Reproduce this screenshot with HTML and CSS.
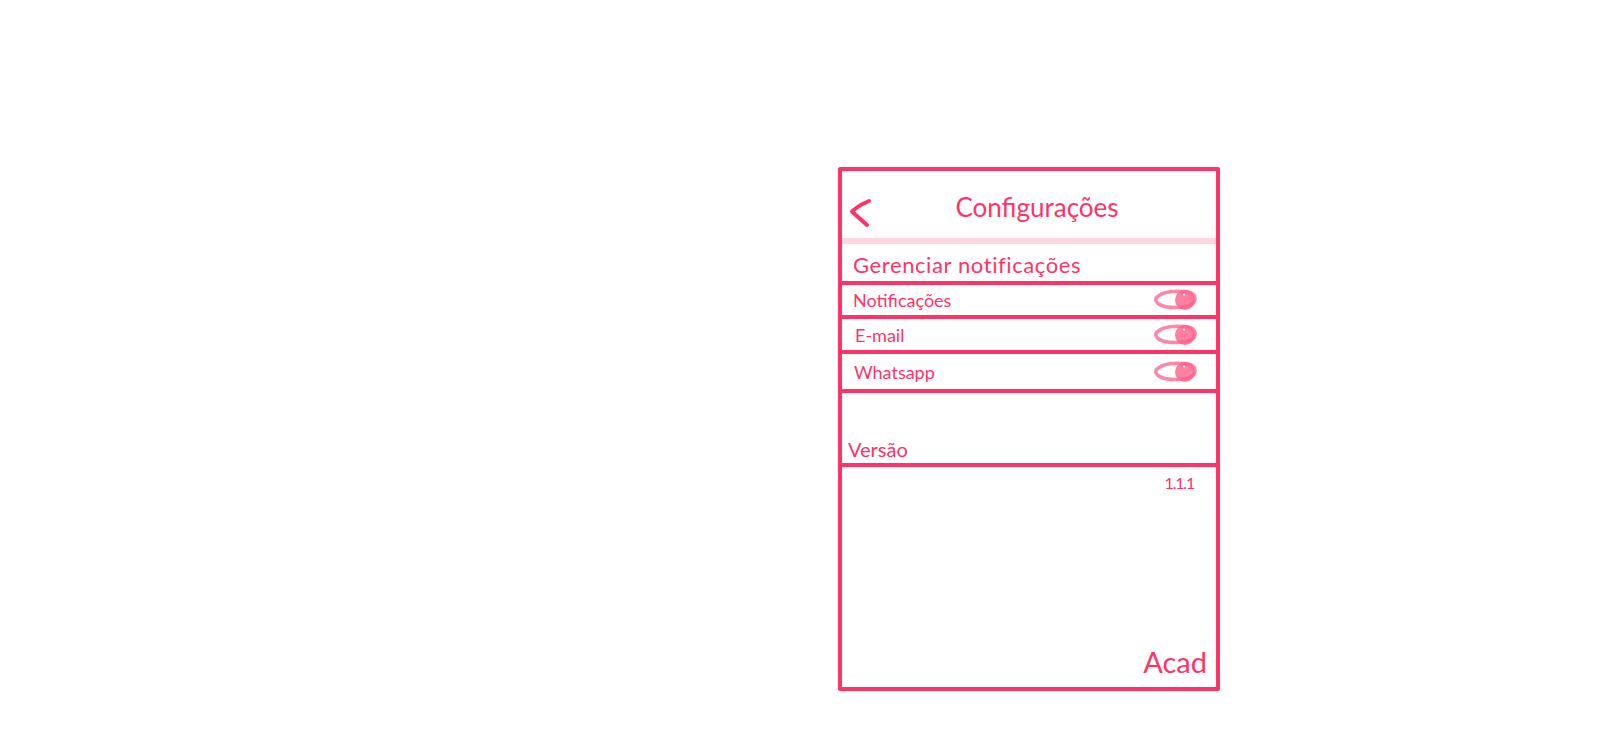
FILE: index.html
```html
<!DOCTYPE html>
<html lang="pt">
<head>
<meta charset="utf-8">
<title>Configurações</title>
<link rel="stylesheet" href="styles.css">
</head>
<body>
<div class="canvas">
  <div class="phone">
    <header class="topbar">
      <span class="back">
        <svg width="28" height="32" viewBox="0 0 28 32"><path d="M23 4 Q13 8 6 14.5 Q13 21 21 28" fill="none" stroke="#ff3366" stroke-width="4" stroke-linecap="round" stroke-linejoin="round"/></svg>
      </span>
      <h1 class="title">Configurações</h1>
    </header>
    <div class="band"></div>
    <div class="section-title">Gerenciar notificações</div>
    <div class="row row-1">
      <span class="label">Notificações</span>
      <svg class="toggle" width="44" height="22" viewBox="0 0 44 22"><path d="M34 3 C24 1 9 2.5 3.5 8.5 C0.5 13.5 8 18.5 22 18.5 C34 18.5 42.5 16 42 9 C41.5 4.5 37 2.5 30 2.5" fill="none" stroke="#ff86a6" stroke-width="3.5" stroke-linecap="round"/><circle cx="32" cy="11" r="10" fill="#ff5f88" fill-opacity="0.8"/><circle cx="31" cy="5.5" r="1.1" fill="#fff"/></svg>
    </div>
    <div class="row row-2">
      <span class="label">E-mail</span>
      <svg class="toggle" width="44" height="22" viewBox="0 0 44 22"><path d="M34 3 C24 1 9 2.5 3.5 8.5 C0.5 13.5 8 18.5 22 18.5 C34 18.5 42.5 16 42 9 C41.5 4.5 37 2.5 30 2.5" fill="none" stroke="#ff86a6" stroke-width="3.5" stroke-linecap="round"/><circle cx="32" cy="11" r="10" fill="#ff5f88" fill-opacity="0.8"/><circle cx="31" cy="5.5" r="1.1" fill="#fff"/></svg>
    </div>
    <div class="row row-3">
      <span class="label">Whatsapp</span>
      <svg class="toggle" width="44" height="22" viewBox="0 0 44 22"><path d="M34 3 C24 1 9 2.5 3.5 8.5 C0.5 13.5 8 18.5 22 18.5 C34 18.5 42.5 16 42 9 C41.5 4.5 37 2.5 30 2.5" fill="none" stroke="#ff86a6" stroke-width="3.5" stroke-linecap="round"/><circle cx="32" cy="11" r="10" fill="#ff5f88" fill-opacity="0.8"/><circle cx="31" cy="5.5" r="1.1" fill="#fff"/></svg>
    </div>
    <div class="version-head">Versão</div>
    <div class="footer">
      <span class="version">1.1.1</span>
      <span class="brand">Acad</span>
    </div>
  </div>
</div>
</body>
</html>
```
FILE: styles.css
```css
html, body {
  margin: 0;
  padding: 0;
  background: #ffffff;
}
body {
  font-family: Lato, "Open Sans", sans-serif;
  color: #ff3366;
}
.canvas {
  width: 1600px;
  height: 740px;
  box-sizing: border-box;
  padding: 167px 0 0 838px;
}
.phone {
  width: 382px;
  height: 524px;
  box-sizing: border-box;
  border: 4px solid #ff3366;
  border-radius: 2px;
  display: flex;
  flex-direction: column;
}
.topbar {
  height: 67px;
  display: flex;
  align-items: center;
  padding-top: 4px;
  box-sizing: border-box;
}
.back {
  width: 34px;
  display: flex;
  justify-content: flex-start;
  padding: 13px 0 0 4px;
  box-sizing: border-box;
}
.back svg { display: block; }
.title {
  flex: 1;
  margin: 0;
  padding-right: 18px;
  text-align: center;
  font-weight: 400;
  font-size: 26px;
  line-height: 1;
  color: #ff3366;
}
.band {
  height: 6px;
  background: #ffd5df;
}
.section-title {
  height: 37px;
  box-sizing: border-box;
  padding: 9px 0 0 11px;
  font-size: 22px;
  letter-spacing: 0.6px;
  line-height: 24px;
}
.row {
  box-sizing: border-box;
  border-top: 4px solid #ff3366;
  display: flex;
  align-items: center;
  justify-content: space-between;
  padding: 0 19px 0 11px;
  font-size: 18px;
}
.row-1 { height: 34px; }
.row-2 { height: 35px; padding-left: 13px; }
.row-3 { height: 39px; padding-left: 12px; }
.toggle { display: block; }
.version-head {
  border-top: 4px solid #ff3366;
  border-bottom: 4px solid #ff3366;
  height: 78px;
  box-sizing: border-box;
  display: flex;
  align-items: flex-end;
  padding: 0 0 2px 6px;
  font-size: 20px;
  line-height: 24px;
}
.footer {
  flex: 1;
  display: flex;
  flex-direction: column;
  align-items: flex-end;
  justify-content: space-between;
  padding: 6px 9px 10px 0;
}
.version {
  font-size: 16px;
  line-height: 20px;
  letter-spacing: -1.2px;
  margin-right: 13px;
}
.brand {
  font-size: 29px;
  line-height: 30px;
}
```
